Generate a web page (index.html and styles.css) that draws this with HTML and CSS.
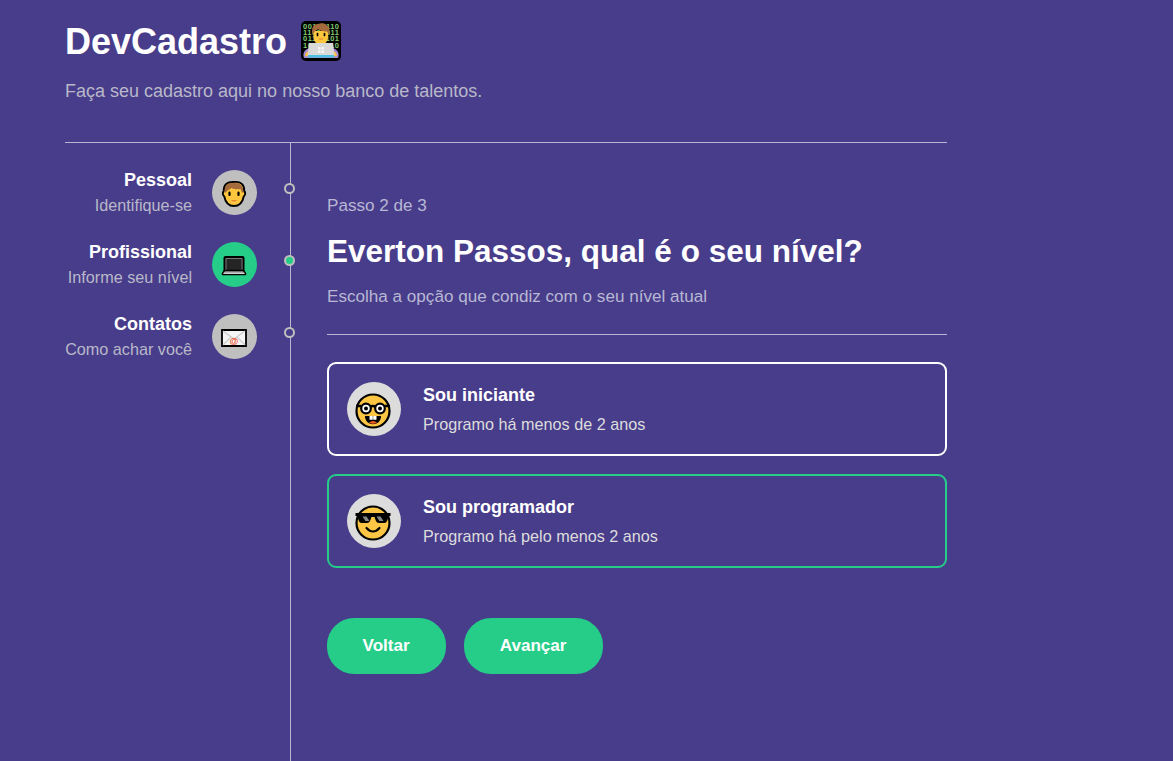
FILE: index.html
```html
<!DOCTYPE html>
<html lang="pt-BR">
<head>
<meta charset="UTF-8">
<title>DevCadastro</title>
<link rel="stylesheet" href="styles.css">
</head>
<body>
<div class="page">
  <header class="header">
    <h1 class="brand"><span class="brand-name">DevCadastro</span>
      <svg class="brand-icon" viewBox="0 0 42 42" aria-hidden="true">
        <rect x="1" y="1" width="40" height="40" rx="5" fill="#000"/>
        <g class="binary"><text x="3" y="9" textLength="36">00110110</text><text x="3" y="15.200" textLength="36">11001011</text><text x="3" y="21.400" textLength="36">01101101</text><text x="3" y="27.600" textLength="36">10110110</text></g>
        <path d="M4 38c-2-5 1-9 6-10h22c5 1 8 5 6 10z" fill="#a18bd8"/>
        <path d="M5 36c0-4 4-6 5-3l2 4zM37 36c0-4-4-6-5-3l-2 4z" fill="#fcc23f"/>
        <path d="M18 21h6v4h-6z" fill="#e9a82c"/>
        <path d="M13.500 11h14.500v6c0 10-14.500 10-14.500 0z" fill="#fcc73f"/>
        <path d="M12.500 15C11 7 14 4 18 4c5-2 11 0 11.500 7l-.500 4-2-3.500c-4 .500-7-1-9-2.500-2 2-4 2-5.500 6z" fill="#a56a3c"/>
        <path d="M17.500 13.500v2M24.500 13.500v2" stroke="#000" stroke-width="1.700" stroke-linecap="round"/>
        <path d="M19 19h4" stroke="#e67a28"/>
        <path d="M9 23h24l1.500 12.500h-27z" fill="#d9d9d9"/>
        <path d="M18 27h2.500v2.500H18zM21.500 27H24v2.500h-2.500zM18 30.500h2.500V33H18zM21.500 30.500H24V33h-2.500z" fill="#f5f5f5"/>
        <path d="M8 35h26v2.500H8z" fill="#4cc0e2"/>
      </svg>
    </h1>
    <p class="tagline">Faça seu cadastro aqui no nosso banco de talentos.</p>
  </header>
  <div class="steps">
    <aside class="sidebar">
      <div class="step">
        <div class="step-info"><h2>Pessoal</h2><p>Identifique-se</p></div>
        <div class="step-icon">
          <svg viewBox="0 0 26 28" width="26" height="28">
            <path d="M13 2C20 1 23.500 5 23.200 11c1.500 1.500 1.300 4-.500 5.500C21.500 23 18 26 13 26S4.500 23 3.300 16.500C1.500 15 1.300 12.500 2.800 11 2.500 5 6 1.500 13 2z" fill="#fcc63e" stroke="#000" stroke-width="1.900"/>
            <path d="M3.800 13C2.800 6 6 3 11 3c7-1 12 2 11.200 10l-1.400-.800-1.300-3.200c-4 .700-7 0-9-1C9 9.500 6.500 10 5.200 12z" fill="#a56b3d"/>
            <path d="M8.500 12.500v2.500M17.500 12.500v2.500" stroke="#000" stroke-width="2.200" stroke-linecap="round"/>
            <path d="M9.800 20h6.400q-3.200 3-6.400 0z" fill="#ec8432"/>
          </svg>
        </div>
        <span class="dot"></span>
      </div>
      <div class="step active">
        <div class="step-info"><h2>Profissional</h2><p>Informe seu nível</p></div>
        <div class="step-icon">
          <svg viewBox="0 0 26 28" width="26" height="28">
            <path d="M3.500 6q0-1 1-1h17q1 0 1 1v13h-19z" fill="#252525" stroke="#000" stroke-width="2"/>
            <path d="M5 19V6.500h16V19" fill="none" stroke="#777"/>
            <path d="M3.500 18.500h19l2 3v1h-23v-1z" fill="#999" stroke="#000" stroke-width="1.500" stroke-linejoin="round"/>
            <path d="M2.500 21.300h21" stroke="#ddd" stroke-width="1.200"/>
          </svg>
        </div>
        <span class="dot"></span>
      </div>
      <div class="step">
        <div class="step-info"><h2>Contatos</h2><p>Como achar você</p></div>
        <div class="step-icon">
          <svg viewBox="0 0 26 28" width="26" height="28">
            <path d="M1 6h24v16H1z" fill="#f5f5f5" stroke="#000" stroke-width="1.800"/>
            <path d="M2 7l11 8 11-8M2 21l8-8M24 21l-8-8" fill="none" stroke="#ccc" stroke-width="1.200"/>
            <text class="at" x="13" y="19.500" text-anchor="middle">@</text>
          </svg>
        </div>
        <span class="dot"></span>
      </div>
    </aside>
    <main class="content">
      <p class="progress">Passo 2 de 3</p>
      <h1 class="question">Everton Passos, qual é o seu nível?</h1>
      <p class="hint">Escolha a opção que condiz com o seu nível atual</p>
      <hr class="rule">
      <div class="option">
        <div class="option-icon">
          <svg viewBox="0 0 38 38" width="38" height="38">
            <circle cx="19" cy="19" r="16.500" fill="#fcc644" stroke="#000" stroke-width="2.200"/>
            <path d="M2 14h5M16 15q3-2 6 0M31 14h5" fill="none" stroke="#000" stroke-width="2.500"/>
            <circle cx="12" cy="16.500" r="4.800" fill="#fff" stroke="#000" stroke-width="2.200"/>
            <circle cx="26" cy="16.500" r="4.800" fill="#fff" stroke="#000" stroke-width="2.200"/>
            <circle cx="12" cy="16.500" r="2"/><circle cx="26" cy="16.500" r="2"/>
            <path d="M11 24h16c0 11-16 11-16 0z"/>
            <path d="M15 30.500q4-3 8 0-4 2.500-8 0z" fill="#f15a24"/>
            <path d="M15.500 24h3.300v3.800h-3.300zM19.200 24h3.300v3.800h-3.300z" fill="#fff"/>
          </svg>
        </div>
        <div class="option-info"><h2>Sou iniciante</h2><p>Programo há menos de 2 anos</p></div>
      </div>
      <div class="option selected">
        <div class="option-icon">
          <svg viewBox="0 0 38 38" width="38" height="38">
            <circle cx="19" cy="19" r="16.500" fill="#fcc644" stroke="#000" stroke-width="2.200"/>
            <path d="M1.500 9h35v3h-2c-1 4-1.500 7-4 7h-5.500c-3 0-3.500-3.500-4.500-6h-3c-1 2.500-1.500 6-4.500 6H7.500c-2.500 0-3-3-4-7h-2z"/>
            <path d="M8.500 12.500h4l3 4.500h-4zM22.500 12.500h4l3 4.500h-4z" fill="#888"/>
            <path d="M12.500 24q6.500 7 13 0" fill="none" stroke="#000" stroke-width="2.200" stroke-linecap="round"/>
          </svg>
        </div>
        <div class="option-info"><h2>Sou programador</h2><p>Programo há pelo menos 2 anos</p></div>
      </div>
      <div class="actions"><button class="button">Voltar</button><button class="button">Avançar</button></div>
    </main>
  </div>
</div>
</body>
</html>
```

FILE: styles.css
```css
* { box-sizing: border-box; margin: 0; padding: 0; }
body {
  height: 761px;
  overflow: hidden;
  background: #483d8b;
  color: #fff;
  font-family: "Liberation Sans", Arial, sans-serif;
}
.page { display: flex; flex-direction: column; width: 882px; height: 761px; margin-left: 65px; }
.header { height: 143px; padding-top: 20px; border-bottom: 1px solid #b8b8d4; }
.brand { display: flex; align-items: center; gap: 13px; height: 42px; font-size: 36px; line-height: 42px; }
.brand-name { padding-top: 2px; }
.brand-icon { width: 42px; height: 42px; }
.binary { fill: #80ca74; font: bold 7.5px "Liberation Sans", sans-serif; }
.tagline { margin-top: 19px; font-size: 18px; line-height: 21px; color: #b8b8c8; }
.steps { display: flex; flex: 1; }
.sidebar { display: flex; flex-direction: column; gap: 27px; width: 226px; padding-top: 27px; border-right: 1px solid #b8b8d4; }
.step { position: relative; display: flex; justify-content: flex-end; gap: 20px; height: 45px; padding-right: 33px; }
.step-info { text-align: right; white-space: nowrap; }
.step-info h2 { font-size: 18px; line-height: 20px; }
.step-info p { margin-top: 5px; font-size: 16.2px; line-height: 20px; color: #b8b8c8; }
.step-icon { display: flex; align-items: center; justify-content: center; flex: none; width: 45px; height: 45px; border-radius: 50%; background: #bfbfbf; }
.step-icon svg { margin: 3px 1px 0 0; }
.active .step-icon { background: #25cd89; }
.at { fill: #f04b23; font: bold 9px "Liberation Sans", sans-serif; }
.dot { position: absolute; top: 13px; right: -5px; width: 11px; height: 11px; border: 2px solid #bfbfbf; border-radius: 50%; background: #483d8b; }
.active .dot { background: #25cd89; }
.content { flex: 1; padding: 53px 0 0 36px; }
.progress { font-size: 17.1px; line-height: 20px; color: #b8b8d4; }
.question { margin-top: 17px; font-size: 31.5px; line-height: 36px; white-space: nowrap; }
.hint { margin-top: 18px; font-size: 17.1px; line-height: 20px; color: #b8b8d4; }
.rule { height: 1px; margin: 27px 0; border: 0; background: #b8b8d4; }
.option { display: flex; align-items: center; gap: 22px; height: 94px; margin-bottom: 18px; padding: 0 18px; border: 2px solid #fff; border-radius: 9px; }
.selected { border-color: #25cd89; }
.option-icon { display: flex; align-items: center; justify-content: center; width: 54px; height: 54px; border-radius: 50%; background: #dcdcdc; }
.option-icon svg { margin: 4px 2px 0 0; }
.option-info h2 { font-size: 18px; line-height: 21px; }
.option-info p { margin-top: 9px; font-size: 16.2px; line-height: 19px; color: #dcdcdc; }
.actions { display: flex; gap: 18px; margin-top: 50px; }
.button { height: 56px; padding: 0 36.5px 0 35.5px; border: 0; border-radius: 27px; background: #25cd89; color: #fff; font: bold 17.1px "Liberation Sans", Arial, sans-serif; }
```
